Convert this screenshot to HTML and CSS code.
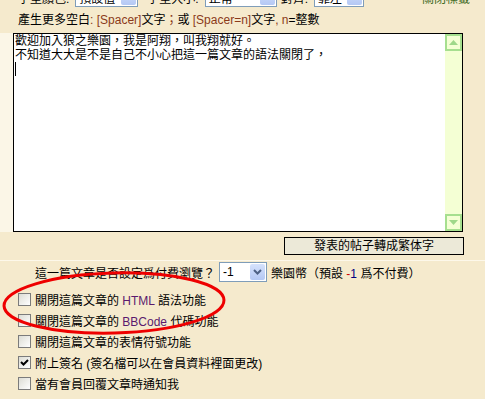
FILE: index.html
```html
<!DOCTYPE html>
<html lang="zh-Hant">
<head>
  <meta charset="UTF-8">
  <meta name="viewport" content="width=device-width, initial-scale=1.0">
  <title>發表文章</title>
  <link rel="stylesheet" href="styles.css">
</head>
<body>

  <div class="toolbar">
    <span class="lbl">字型顏色:</span>
    <span class="sel sel-color"><span class="val">預設值</span><span class="drop"><svg width="9" height="6" viewBox="0 0 9 6"><path d="M1 1 L4.5 4.5 L8 1" fill="none" stroke="#4d6185" stroke-width="2"/></svg></span></span>
    <span class="lbl">字型大小:</span>
    <span class="sel sel-size"><span class="val">正常</span><span class="drop"><svg width="9" height="6" viewBox="0 0 9 6"><path d="M1 1 L4.5 4.5 L8 1" fill="none" stroke="#4d6185" stroke-width="2"/></svg></span></span>
    <span class="lbl">對齊:</span>
    <span class="sel sel-align"><span class="val">靠左</span><span class="drop"><svg width="9" height="6" viewBox="0 0 9 6"><path d="M1 1 L4.5 4.5 L8 1" fill="none" stroke="#4d6185" stroke-width="2"/></svg></span></span>
    <span class="close-tags">關閉標籤</span>
  </div>

  <div class="hint">產生更多空白<span class="code">:</span> <span class="code">[Spacer]</span>文字<span class="code">；</span>或 <span class="code">[Spacer=n]</span>文字<span class="code">,</span> <span class="code">n</span>=整數</div>

  <div class="editor-row">
    <div class="gutter"></div>
    <div class="editor">
      <div class="editor-text">歡迎加入狼之樂園，我是阿翔，叫我翔就好。<br>不知道大大是不是自己不小心把這一篇文章的語法關閉了，<br><span class="caret"></span></div>
      <div class="scrollbar">
        <span class="sb-btn"><svg width="9" height="5" viewBox="0 0 9 5"><path d="M0 5 L4.5 0 L9 5 Z" fill="#9fd88a"/></svg></span>
        <span class="sb-track"></span>
        <span class="sb-btn"><svg width="9" height="5" viewBox="0 0 9 5"><path d="M0 0 L4.5 5 L9 0 Z" fill="#9fd88a"/></svg></span>
      </div>
    </div>
  </div>

  <div class="convert-row">
    <button class="convert">發表的帖子轉成繁体字</button>
  </div>

  <div class="options">
    <div class="pay-row">
      <span class="pay-text">這一篇文章是否設定爲付費瀏覽？</span>
      <span class="sel sel-pay"><span class="val">-1</span><span class="drop"><svg width="9" height="6" viewBox="0 0 9 6"><path d="M1 1 L4.5 4.5 L8 1" fill="none" stroke="#4d6185" stroke-width="2"/></svg></span></span>
      <span class="pay-text">樂園幣（預設 <span class="minus">-</span><span class="one">1</span> 爲不付費）</span>
    </div>
    <div class="opt"><span class="box"></span><span class="opt-text">關閉這篇文章的 <span class="tag">HTML</span> 語法功能</span></div>
    <div class="opt"><span class="box"></span><span class="opt-text">關閉這篇文章的 <span class="tag">BBCode</span> 代碼功能</span></div>
    <div class="opt"><span class="box"></span><span class="opt-text">關閉這篇文章的表情符號功能</span></div>
    <div class="opt"><span class="box"><svg width="11" height="11" viewBox="0 0 11 11"><path d="M2 5 L4.5 7.5 L9 3" fill="none" stroke="#000" stroke-width="2"/></svg></span><span class="opt-text">附上簽名 (簽名檔可以在會員資料裡面更改)</span></div>
    <div class="opt"><span class="box"></span><span class="opt-text">當有會員回覆文章時通知我</span></div>
  </div>

  <svg class="circle" width="485" height="399" viewBox="0 0 485 399">
    <ellipse cx="114" cy="303" rx="110" ry="30" transform="rotate(-1.5 114 303)" fill="none" stroke="#ee0000" stroke-width="3"/>
  </svg>

</body>
</html>
```

FILE: styles.css
```css
body {
 margin: 0;
 background-color: #f5eacd;
 font-family: "Liberation Sans", "Noto Sans CJK TC", sans-serif;
 font-size: 12px;
 color: #000;
 position: relative;
 height: 399px;
 overflow: hidden;
}
.toolbar {
 display: flex;
 align-items: center;
 height: 20px;
 margin-top: -13px;
 padding-left: 18px;
}
.lbl {
 margin-right: 6px;
}
.sel {
 display: flex;
 align-items: center;
 box-sizing: border-box;
 height: 20px;
 border: 1px solid #7f9db9;
 background-color: #fff;
}
.sel .val {
 flex: 1;
 padding-left: 3px;
}
.sel .drop {
 display: flex;
 align-items: center;
 justify-content: center;
 width: 15px;
 height: 16px;
 margin-right: 1px;
 border-radius: 2px;
 background: linear-gradient(#d6e2fc, #b4c8f4);
}
.sel-color {
 width: 63px;
 margin-right: 9px;
}
.sel-size {
 width: 72px;
 margin-right: 4px;
}
.sel-align {
 width: 50px;
}
.close-tags {
 margin-left: auto;
 margin-right: 15px;
 color: #3d6b1f;
}
.hint {
 height: 26px;
 line-height: 26px;
 padding-left: 18px;
}
.code {
 color: #8b3a1a;
}
.editor-row {
 display: flex;
 height: 199px;
}
.gutter {
 width: 13px;
 background-color: #fbf6e7;
}
.editor {
 display: flex;
 box-sizing: border-box;
 width: 450px;
 border: 1px solid #000;
 background-color: #fff;
}
.editor-text {
 flex: 1;
 padding-left: 1px;
 line-height: 14px;
}
.caret {
 display: inline-block;
 width: 1px;
 height: 14px;
 background-color: #000;
 vertical-align: top;
}
.scrollbar {
 display: flex;
 flex-direction: column;
 width: 17px;
 background-color: #f4ffd4;
}
.sb-btn {
 display: flex;
 align-items: center;
 justify-content: center;
 box-sizing: border-box;
 width: 17px;
 height: 17px;
 border: 2px solid #a6df8f;
}
.sb-track {
 flex: 1;
}
.convert-row {
 display: flex;
 justify-content: flex-end;
 padding-right: 21px;
 margin-top: 5px;
}
.convert {
 box-sizing: border-box;
 width: 180px;
 height: 18px;
 padding: 0;
 border: 1px solid #000;
 background-color: #ece9d8;
 font-family: inherit;
 font-size: 12px;
 line-height: 16px;
}
.options {
 margin-top: 5px;
 border-top: 1px solid #fdf8ea;
}
.pay-row {
 display: flex;
 align-items: flex-start;
 height: 28px;
 padding-left: 35px;
}
.pay-text {
 line-height: 26px;
}
.sel-pay {
 width: 48px;
 margin: 1px 4px 0 4px;
}
.minus {
 color: #cc0000;
}
.one {
 color: #000080;
}
.opt {
 display: flex;
 align-items: center;
 height: 21px;
 padding-left: 18px;
}
.box {
 display: flex;
 align-items: center;
 justify-content: center;
 box-sizing: border-box;
 width: 13px;
 height: 13px;
 margin-right: 4px;
 border: 1px solid #7b7b7b;
 background: linear-gradient(135deg, #dcdcd4, #fff);
}
.tag {
 color: #5a1a6e;
}
.circle {
 position: absolute;
 left: 0;
 top: 0;
 pointer-events: none;
}
```
